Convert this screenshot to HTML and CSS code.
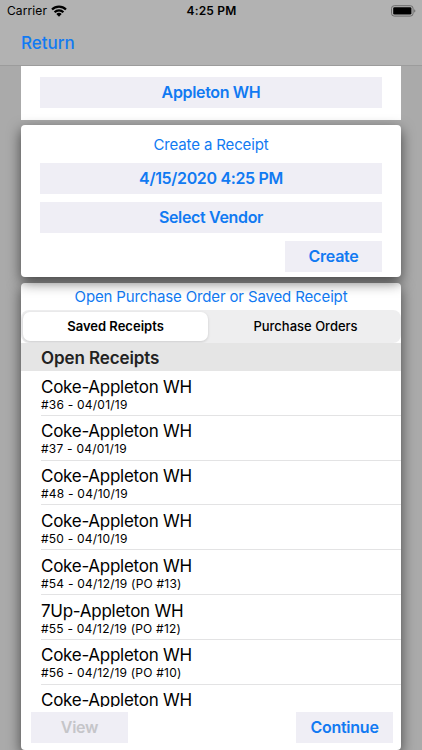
FILE: index.html
```html
<!DOCTYPE html>
<html lang="en">
<head>
  <meta charset="UTF-8">
  <meta name="viewport" content="width=device-width, initial-scale=1.0">
  <title>Receipts</title>
  <link rel="stylesheet" href="styles.css">
</head>
<body>
  <header class="header">
    <div class="status">
      <div class="status-left">
        <span class="carrier">Carrier</span>
        <svg class="wifi" width="16" height="12" viewBox="0 0 16 12">
          <g fill="none" stroke="#000" stroke-width="2.2">
            <path d="M1 4.5A9.9 9.9 0 0 1 15 4.5"/>
            <path d="M3.6 7.2A6.2 6.2 0 0 1 12.4 7.2"/>
          </g>
          <path d="M5.3 9A3.8 3.8 0 0 1 10.7 9L8 11.7Z"/>
        </svg>
      </div>
      <span class="time">4:25 PM</span>
      <div class="status-right">
        <svg width="25" height="12" viewBox="0 0 25 12">
          <rect x=".5" y=".7" width="21.6" height="10.4" rx="2.8" fill="none" stroke="#6c6c6c"/>
          <rect x="2.2" y="2.3" width="18.2" height="7.2" rx="1.3"/>
          <path d="M23.2 4.2C24.8 4.8 24.8 7 23.2 7.6Z" fill="#6c6c6c"/>
        </svg>
      </div>
    </div>
    <a class="back">Return</a>
  </header>

  <main class="content">
    <section class="card card-warehouse">
      <button class="btn">Appleton WH</button>
    </section>

    <section class="card card-create">
      <h2 class="card-title create-title">Create a Receipt</h2>
      <button class="btn">4/15/2020 4:25 PM</button>
      <button class="btn">Select Vendor</button>
      <button class="btn btn-small">Create</button>
    </section>

    <section class="card card-open">
      <h2 class="card-title open-title">Open Purchase Order or Saved Receipt</h2>
      <div class="segment">
        <button class="segment-item is-active">Saved Receipts</button>
        <button class="segment-item">Purchase Orders</button>
      </div>
      <h3 class="list-head">Open Receipts</h3>
      <ul class="list">
        <li class="row"><p class="name">Coke-Appleton WH</p><p class="detail">#36 - 04/01/19</p></li>
        <li class="row"><p class="name">Coke-Appleton WH</p><p class="detail">#37 - 04/01/19</p></li>
        <li class="row"><p class="name">Coke-Appleton WH</p><p class="detail">#48 - 04/10/19</p></li>
        <li class="row"><p class="name">Coke-Appleton WH</p><p class="detail">#50 - 04/10/19</p></li>
        <li class="row"><p class="name">Coke-Appleton WH</p><p class="detail">#54 - 04/12/19 (PO #13)</p></li>
        <li class="row"><p class="name">7Up-Appleton WH</p><p class="detail">#55 - 04/12/19 (PO #12)</p></li>
        <li class="row"><p class="name">Coke-Appleton WH</p><p class="detail">#56 - 04/12/19 (PO #10)</p></li>
        <li class="row"><p class="name">Coke-Appleton WH</p></li>
      </ul>
      <div class="actions">
        <button class="btn btn-small" disabled>View</button>
        <button class="btn btn-small">Continue</button>
      </div>
    </section>
  </main>
</body>
</html>
```
FILE: styles.css
```css
* {
  margin: 0;
  padding: 0;
  box-sizing: border-box;
}

body {
  width: 422px;
  height: 750px;
  overflow: hidden;
  font-family: Inter, "Liberation Sans", sans-serif;
  color: #000;
  background: #aaa;
}

/* header */
.header {
  height: 66px;
  background: #b2b2b2;
  border-bottom: 1px solid #9c9c9c;
}

.status {
  display: flex;
  align-items: center;
  height: 22px;
  padding: 0 6px 0 7px;
  font-size: 12px;
}

.status-left,
.status-right {
  display: flex;
  flex: 1;
  align-items: center;
  gap: 4px;
}

.status-left {
  padding-bottom: 1px;
}

.status-right {
  justify-content: flex-end;
  padding-bottom: 1px;
}

.carrier {
  letter-spacing: 0.1px;
}

.time {
  padding-bottom: 1px;
  font-weight: 600;
  letter-spacing: 0.2px;
}

.back {
  display: block;
  padding-left: 21px;
  font-size: 17px;
  font-weight: 500;
  line-height: 42px;
  color: #117af2;
}

/* cards */
.content {
  padding: 0 21px;
}

.card {
  background: #fff;
  border-radius: 4px;
}

.card-warehouse {
  height: 54px;
  padding: 11px 19px 0;
  border-radius: 0;
}

.card-create {
  position: relative;
  z-index: 1;
  display: flex;
  flex-direction: column;
  gap: 8px;
  height: 152px;
  margin-top: 5px;
  padding: 9px 19px 0;
  box-shadow: 0 5px 14px rgba(0, 0, 0, 0.6);
}

.card-open {
  display: flex;
  flex-direction: column;
  height: 467px;
  margin-top: 6px;
  box-shadow: 0 5px 14px rgba(0, 0, 0, 0.6);
}

.card-title {
  font-size: 15px;
  font-weight: 400;
  letter-spacing: -0.14px;
  text-align: center;
  color: #117af2;
}

.create-title {
  height: 21px;
  line-height: 21px;
}

.open-title {
  height: 27px;
  line-height: 27px;
}

.btn {
  flex-shrink: 0;
  width: 100%;
  height: 31px;
  padding-bottom: 2px;
  border: none;
  font-family: inherit;
  font-size: 16px;
  font-weight: 600;
  letter-spacing: -0.34px;
  color: #117af2;
  background: #efeef5;
}

.btn-small {
  width: 97px;
  letter-spacing: -0.25px;
}

.card-create .btn-small {
  align-self: flex-end;
}

.btn:disabled {
  color: #c5c5c9;
}

/* segmented control */
.segment {
  display: flex;
  height: 33px;
  padding: 2px;
  border-radius: 8px;
  background: #eeeeef;
}

.segment-item {
  flex: 1;
  padding: 0 0 1px 4px;
  border: none;
  border-radius: 7px;
  font-family: inherit;
  font-size: 13px;
  font-weight: 500;
  color: #000;
  background: none;
}

.segment-item.is-active {
  flex: 0 0 185px;
  padding-left: 0;
  font-weight: 600;
  background: #fff;
  box-shadow: 0 1px 3px rgba(0, 0, 0, 0.15);
}

/* receipts list */
.list-head {
  height: 28px;
  padding-left: 20px;
  font-size: 17px;
  font-weight: 600;
  letter-spacing: -0.1px;
  line-height: 30px;
  color: #222;
  background: #e5e5e5;
}

.list {
  height: 336px;
  overflow: hidden;
  list-style: none;
}

.row {
  height: 44.8px;
  margin-left: 20px;
  padding-top: 5.6px;
  border-bottom: 1px solid #e3e3e4;
}

.name {
  font-size: 17px;
  letter-spacing: -0.27px;
  line-height: 21px;
}

.detail {
  font-size: 12px;
  letter-spacing: 0.22px;
  line-height: 14px;
}

.actions {
  display: flex;
  justify-content: space-between;
  padding: 5px 8px 0 10px;
}
```
